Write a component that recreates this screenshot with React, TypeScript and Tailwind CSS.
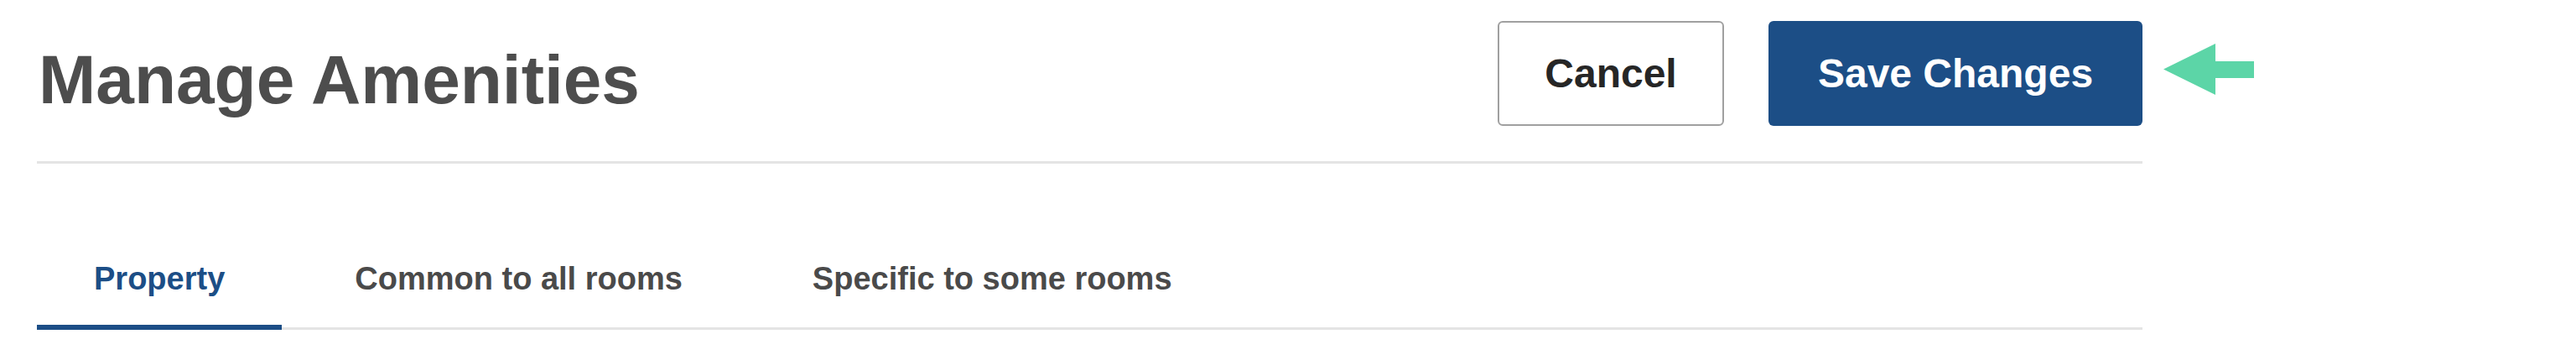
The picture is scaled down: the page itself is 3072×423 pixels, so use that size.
const tabs = ["Property", "Common to all rooms", "Specific to some rooms"];

const BackArrow = () => (
  <svg width="108" height="61" viewBox="0 0 108 61" className="block">
    <polygon points="0,30.5 62,0 62,21 108,21 108,41 62,41 62,61" fill="#5cd5a7" />
  </svg>
);

const App = () => {
  const active = 0;

  return (
    <div className="min-h-[423px] bg-white pt-[25px] pl-[44px] font-['Liberation_Sans',Arial,sans-serif]">
      <div className="w-[2511px]">
        <div className="flex items-start justify-between">
          <h1 className="mt-[29px] ml-[2px] text-[82px] leading-[82px] font-bold text-[#4d4d4d]">
            Manage Amenities
          </h1>

          <div className="flex items-start gap-[53px]">
            <button className="h-[125px] w-[270px] rounded-md border-2 border-[#a0a0a0] bg-white text-[48px] font-bold text-[#262626]">
              Cancel
            </button>

            <div className="relative">
              <button className="h-[125px] w-[446px] rounded-md bg-[#1c4e86] text-[48px] font-bold text-white">
                Save Changes
              </button>
              <div className="absolute left-full top-[27px] ml-[25px]">
                <BackArrow />
              </div>
            </div>
          </div>
        </div>

        <div className="mt-[42px] h-[3px] bg-[#e4e4e4]" />

        <div className="mt-[115px] flex gap-[19px] border-b-[3px] border-[#e4e4e4]">
          {tabs.map((tab, idx) => (
            <button
              key={idx}
              className={
                idx === active
                  ? "-mb-[3px] border-b-[6px] border-[#1c4e86] px-[68px] pb-[33px] text-[38px] leading-[44px] font-bold text-[#1c4e86]"
                  : "-mb-[3px] border-b-[6px] border-transparent px-[68px] pb-[33px] text-[38px] leading-[44px] font-bold text-[#4a4a4a]"
              }
            >
              {tab}
            </button>
          ))}
        </div>
      </div>
    </div>
  );
};

export default App;
